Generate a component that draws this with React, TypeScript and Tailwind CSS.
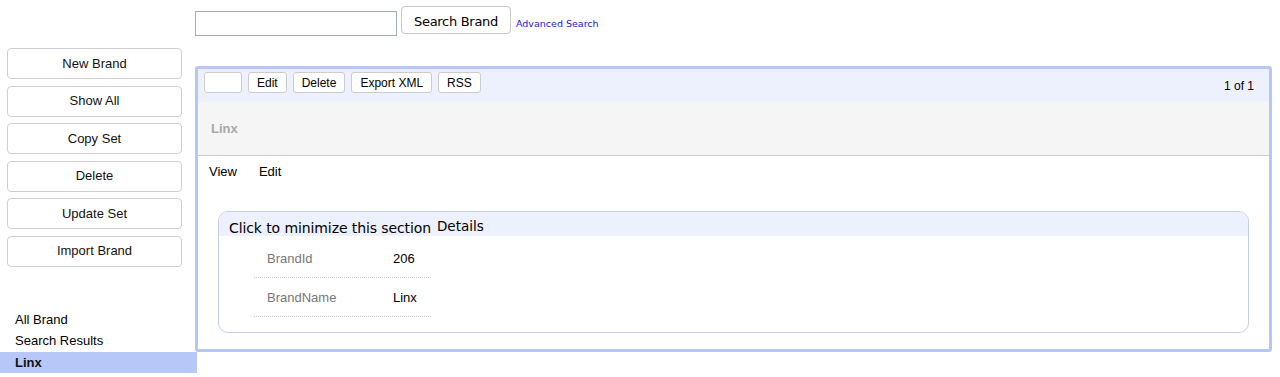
import React from "react";

const SIDE_BUTTONS = ["New Brand", "Show All", "Copy Set", "Delete", "Update Set", "Import Brand"];
const TOOL_BUTTONS = ["", "Edit", "Delete", "Export XML", "RSS"];
const FIELDS = [
  { label: "BrandId", value: "206" },
  { label: "BrandName", value: "Linx" },
];

const App: React.FC = () => {
  return (
    <div className="flex h-[377px] w-[1280px] bg-white font-['Liberation_Sans',Arial,sans-serif] text-[13px] text-black">
      {/* sidebar */}
      <div className="flex w-[195px] flex-none flex-col pt-[48px]">
        <div className="flex flex-col gap-[6.5px] pl-[7px] pr-[13px]">
          {SIDE_BUTTONS.map((label) => (
            <button
              key={label}
              className="h-[31px] rounded-[4px] border border-[#cfcfcf] bg-white text-[13px] text-[#111]"
            >
              {label}
            </button>
          ))}
        </div>
        <div className="mt-[42px] flex flex-col">
          <div className="h-[21px] pl-[15px] leading-[21px]">All Brand</div>
          <div className="h-[21px] pl-[15px] leading-[21px]">Search Results</div>
          <div className="mt-[1px] h-[21px] w-[197px] bg-[#b7c7f7] pl-[15px] font-bold leading-[21px] text-[#111]">Linx</div>
        </div>
      </div>

      {/* main */}
      <div className="flex flex-1 flex-col pr-[8px]">
        <div className="flex items-start pt-[6px]">
          <input className="mt-[5px] h-[25px] w-[202px] border border-[#a5acb5] bg-white" />
          <button className="ml-[4px] h-[28px] w-[110px] rounded-[4px] border border-[#c8c8c8] bg-white pt-[3px] font-['DejaVu_Sans',sans-serif] text-[13px] tracking-[-0.3px]">
            Search Brand
          </button>
          <a className="ml-[5px] mt-[11px] font-['DejaVu_Sans',sans-serif] text-[9.5px] text-[#1a1acc]">
            Advanced Search
          </a>
        </div>

        <div className="mt-[30px] flex h-[286px] flex-col rounded-[3px] border-[3px] border-[#b7c7f2]">
          <div className="flex h-[33px] items-start justify-between bg-[#edf1fd] pl-[6px] pr-[15px] pt-[3px]">
            <div className="flex gap-[6px]">
              {TOOL_BUTTONS.map((label, i) => (
                <button
                  key={i}
                  className={`h-[21px] rounded-[3px] border border-[#cccccc] bg-white px-[8px] text-[12px] ${label ? "" : "w-[38px]"}`}
                >
                  {label}
                </button>
              ))}
            </div>
            <span className="mt-[5px] text-[12px]">1 of 1</span>
          </div>
          <div className="flex h-[54px] items-center border-b border-[#cccccc] bg-[#f5f5f5] pl-[13px] pt-[1px] text-[13px] font-bold text-[#a8a8a8]">
            Linx
          </div>
          <div className="flex gap-[22px] pl-[11px] pt-[6px] text-[13px]">
            <span>View</span>
            <span>Edit</span>
          </div>
          <div className="mx-[20px] mt-[29px] flex h-[122px] flex-col overflow-hidden rounded-[10px] border border-[#c6cdea]">
            <div className="flex h-[24px] items-start bg-[#edf1fd] pl-[10px] font-['DejaVu_Sans',sans-serif]">
              <span className="mt-[8px] text-[14px] leading-[16px] tracking-[-0.1px]">Click to minimize this section</span>
              <span className="ml-[6px] mt-[6px] text-[13.5px] leading-[16px]">Details</span>
            </div>
            <div className="ml-[35px] mt-[4px] w-[177px]">
              {FIELDS.map((f) => (
                <div key={f.label} className="flex h-[38.5px] items-center border-b border-dotted border-[#c8c8c8] pt-[1px]">
                  <span className="w-[126px] pl-[13px] text-[#777]">{f.label}</span>
                  <span className="pl-[13px]">{f.value}</span>
                </div>
              ))}
            </div>
          </div>
        </div>
      </div>
    </div>
  );
};

export default App;
